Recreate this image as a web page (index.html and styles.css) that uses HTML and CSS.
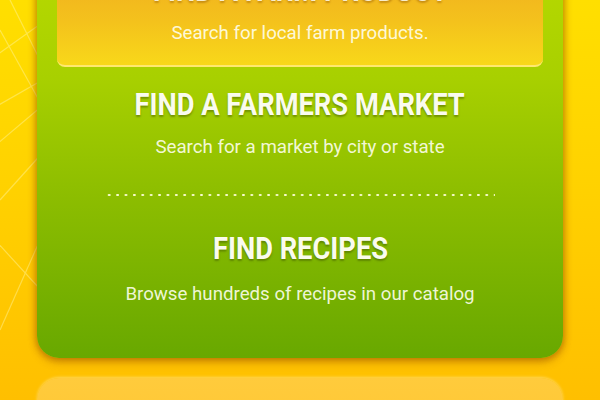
FILE: index.html
```html
<!DOCTYPE html>
<html>
<head>
<meta charset="utf-8">
<link rel="stylesheet" href="styles.css">
</head>
<body>
<svg class="bg-lines" width="600" height="400" viewBox="0 0 600 400">
  <g stroke="#fff6a0" stroke-width="1.2" fill="none" opacity="0.45">
    <path d="M-10 60 L60 10"/>
    <path d="M-10 110 L60 70"/>
    <path d="M0 30 L50 120"/>
    <path d="M0 200 L45 150"/>
    <path d="M-5 240 L50 300"/>
    <path d="M10 0 L40 60"/>
    <path d="M0 330 L40 240"/>
    <path d="M-10 150 L55 95"/>
  </g>
</svg>
<div class="page">
  <div class="card">
    <div class="product">
      <h2 class="title">FIND A FARM PRODUCT</h2>
      <p class="sub">Search for local farm products.</p>
    </div>
    <div class="section market">
      <h2 class="title">FIND A FARMERS MARKET</h2>
      <p class="sub">Search for a market by city or state</p>
    </div>
    <div class="dots"></div>
    <div class="section recipes">
      <h2 class="title">FIND RECIPES</h2>
      <p class="sub">Browse hundreds of recipes in our catalog</p>
    </div>
  </div>
  <div class="card2"></div>
</div>
</body>
</html>
```

FILE: styles.css
```css
html, body {
  margin: 0;
  padding: 0;
  width: 600px;
  height: 400px;
  overflow: hidden;
}
body {
  background: linear-gradient(180deg, #ffdf00 0%, #ffd200 45%, #ffbf00 100%);
  font-family: Roboto, "Liberation Sans", sans-serif;
  position: relative;
}
.bg-lines {
  position: absolute;
  left: 0;
  top: 0;
  z-index: 0;
}
.page {
  position: relative;
  z-index: 1;
  padding: 0 37px;
}
.card {
  margin-top: -42px;
  border-radius: 22px;
  background: linear-gradient(180deg, #b8da00 0%, #a8d000 30%, #8cbd00 60%, #68a800 100%);
  box-shadow: 0 4px 8px rgba(150, 80, 0, 0.45), 2px 0 6px rgba(150, 80, 0, 0.25), -2px 0 6px rgba(150, 80, 0, 0.25);
  padding: 0 20px 53px;
  text-align: center;
}
.product {
  border-radius: 0 0 8px 8px;
  background: linear-gradient(180deg, #f0aa20 0%, #f4c21c 60%, #f8d81a 100%);
  border-bottom: 2px solid #ffe870;
  padding: 16px 0 21px;
}
.title {
  margin: 0;
  font-size: 31px;
  line-height: 34px;
  font-weight: 700;
  color: #fafbee;
  text-shadow: 0 2px 2px rgba(60, 80, 0, 0.45);
  display: inline-block;
  transform: scaleX(0.88);
  white-space: nowrap;
}
.sub {
  margin: 0;
  font-size: 18.7px;
  line-height: 22px;
  color: rgba(255, 255, 240, 0.9);
}
.product .title {
  color: rgba(255, 250, 230, 0.9);
  text-shadow: 0 2px 2px rgba(140, 80, 0, 0.4);
}
.product .sub {
  margin-top: 14px;
}
.market {
  padding-top: 21px;
}
.market .sub {
  margin-top: 14px;
}
.recipes .sub {
  margin-top: 17px;
}
.dots {
  margin: 36px 48px 0;
  height: 2px;
  background-image: radial-gradient(circle, rgba(255, 255, 220, 0.95) 1px, transparent 1.3px);
  background-size: 8.4px 2px;
  background-repeat: repeat-x;
}
.recipes {
  padding-top: 36px;
}
.card2 {
  margin-top: 20px;
  height: 80px;
  border-radius: 22px;
  background: linear-gradient(180deg, #ffcb3c 0%, #ffc630 100%);
  box-shadow: 0 -1px 3px rgba(255, 230, 150, 0.6);
}
```
